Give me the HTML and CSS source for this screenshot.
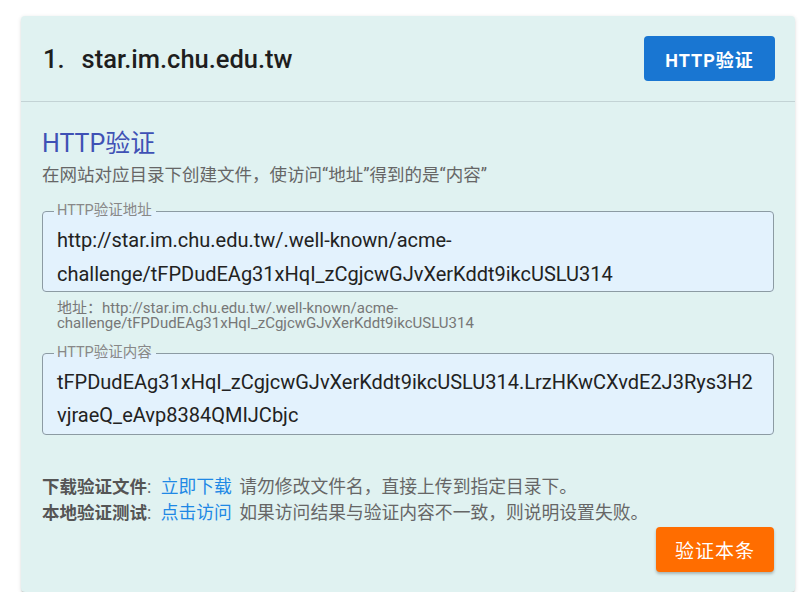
FILE: index.html
```html
<!DOCTYPE html>
<html lang="zh-CN">
<head>
    <meta charset="UTF-8">
    <meta name="viewport" content="width=device-width, initial-scale=1.0">
    <title>HTTP验证</title>
    <link rel="stylesheet" href="styles.css">
</head>
<body>
    <div class="card">
        <div class="card-header">
            <div class="domain"><span class="num">1.</span>star.im.chu.edu.tw</div>
            <button class="btn btn-blue">HTTP验证</button>
        </div>
        <div class="card-body">
            <h2 class="method-title">HTTP验证</h2>
            <p class="method-desc">在网站对应目录下创建文件，使访问“地址”得到的是“内容”</p>

            <fieldset class="field">
                <legend>HTTP验证地址</legend>
                <div class="field-value">http://star.im.chu.edu.tw/.well-known/acme-challenge/tFPDudEAg31xHqI_zCgjcwGJvXerKddt9ikcUSLU314</div>
            </fieldset>
            <div class="hint">地址：http://star.im.chu.edu.tw/.well-known/acme-challenge/tFPDudEAg31xHqI_zCgjcwGJvXerKddt9ikcUSLU314</div>

            <fieldset class="field second">
                <legend>HTTP验证内容</legend>
                <div class="field-value">tFPDudEAg31xHqI_zCgjcwGJvXerKddt9ikcUSLU314.LrzHKwCXvdE2J3Rys3H2vjraeQ_eAvp8384QMIJCbjc</div>
            </fieldset>

            <div class="actions">
                <div><b>下载验证文件</b>: <a href="#">立即下载</a> 请勿修改文件名，直接上传到指定目录下。</div>
                <div><b>本地验证测试</b>: <a href="#">点击访问</a> 如果访问结果与验证内容不一致，则说明设置失败。</div>
            </div>
            <div class="footer">
                <button class="btn btn-orange">验证本条</button>
            </div>
        </div>
    </div>
</body>
</html>
```

FILE: styles.css
```css
body {
    margin: 0;
    background: #fff;
    font-family: Roboto, "Noto Sans CJK SC", sans-serif;
    color: #222;
}
.card {
    margin: 16px 0 0 21px;
    width: 774px;
    background: #e0f2f1;
    border-radius: 4px;
    box-shadow: 0 2px 2px -1px rgba(0,0,0,.3), 0 1px 4px rgba(0,0,0,.12);
}
.card-header {
    height: 85px;
    display: flex;
    justify-content: space-between;
    align-items: center;
    padding: 0 20px 0 22px;
    border-bottom: 1px solid #c3d3d5;
}
.domain {
    font-size: 25.5px;
    font-weight: 500;
    color: #1e1e1e;
}
.num {
    margin-right: 17px;
}
.btn {
    border: none;
    border-radius: 4px;
    color: #fff;
    font-family: Roboto, "Noto Sans CJK SC", sans-serif;
    cursor: pointer;
}
.btn-blue {
    width: 131px;
    height: 45px;
    background: #1976d2;
    font-size: 18px;
    font-weight: bold;
    letter-spacing: 1px;
}
.btn-orange {
    width: 118px;
    height: 45px;
    background: #ff6d00;
    font-size: 19px;
    letter-spacing: 1px;
    box-shadow: 0 2px 3px rgba(0,0,0,.25);
}
.card-body {
    padding: 26px 21px 20px 21px;
}
.method-title {
    margin: 0;
    font-size: 25px;
    font-weight: normal;
    line-height: 32px;
    color: #3f51b5;
}
.method-desc {
    margin: 3px 0 0;
    font-size: 17.5px;
    line-height: 24px;
    color: #666;
}
.field {
    margin: 16px 0 0;
    padding: 4px 14px 0 14px;
    border: 1px solid #8c9ba3;
    border-radius: 4px;
    background: #e3f2fd;
    min-inline-size: 0;
}
.field legend {
    margin-left: -3px;
    padding: 0 4px 0 3px;
    font-size: 14.5px;
    line-height: 16px;
    color: #888;
}
.field-value {
    font-size: 20px;
    line-height: 34px;
    color: #222;
    overflow-wrap: anywhere;
}
.field.second {
    margin-top: 14px;
    padding-top: 5px;
    padding-bottom: 2px;
}
.field.second .field-value {
    line-height: 33px;
}
.hint {
    margin-top: 9px;
    padding-left: 15px;
    font-size: 15px;
    line-height: 15px;
    color: #777;
    overflow-wrap: anywhere;
}
.actions {
    margin-top: 39px;
    font-size: 17.8px;
    line-height: 26px;
    color: #666;
}
.actions b {
    color: #555;
    font-size: 17.5px;
}
.actions a {
    margin: 0 3px 0 5px;
    color: #1e88e5;
    text-decoration: none;
}
.footer {
    display: flex;
    justify-content: flex-end;
    margin-top: 1px;
}
```
